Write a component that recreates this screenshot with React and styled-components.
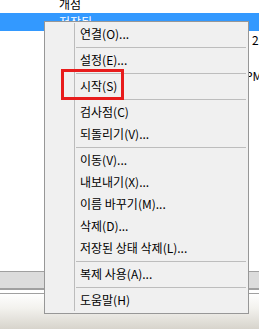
import styled, { createGlobalStyle } from "styled-components";

const GlobalStyle = createGlobalStyle`
    html, body {
        margin: 0;
        padding: 0;
        width: 259px;
        height: 329px;
        overflow: hidden;
        background: #fff;
        font-family: "Noto Sans CJK KR", "Noto Sans", sans-serif;
    }
`;

const Window = styled.div`
    position: relative;
    width: 259px;
    height: 329px;
    display: flex;
    flex-direction: column;
    overflow: hidden;
    background: #fff;
`;

const List = styled.div`
    flex: 1;
    display: flex;
    flex-direction: column;
`;

const Row = styled.div`
    display: flex;
    align-items: flex-end;
    height: ${(p) => p.$h || 18}px;
    overflow: hidden;
    background: ${(p) => (p.$selected ? "#3399ff" : "transparent")};
    color: ${(p) => (p.$selected ? "#fff" : "#000")};
    font-size: 12px;
    line-height: 18px;
    white-space: nowrap;
`;

const NameCell = styled.div`
    width: 245px;
    padding-left: 59px;
    box-sizing: border-box;
    flex-shrink: 0;
`;

const DateCell = styled.div`
    flex-shrink: 0;
    padding-left: ${(p) => p.$indent || 0}px;
`;

const StatusBand = styled.div`
    height: 16px;
    background: #dcdcdc;
    border-top: 1px solid #a0a0a0;
    border-bottom: 2px solid #a0a0a0;
`;

const Gap = styled.div`
    height: 3px;
    background: #fff;
    border-bottom: 1px solid #a0a0a0;
`;

const Footer = styled.div`
    height: 35px;
    background: linear-gradient(#fefefe, #f3f2ee 40%, #d7d4cc);
`;

const Menu = styled.div`
    position: absolute;
    left: 44px;
    top: 21px;
    width: 205px;
    box-sizing: border-box;
    padding: 1px 2px 2px;
    background: #f0f0f0;
    border: 1px solid #979797;
    display: flex;
    flex-direction: column;
    font-size: 12px;
    color: #000;
`;

const Item = styled.div`
    display: flex;
    height: ${(p) => (p.$sep ? 4 : 22)}px;
`;

const Gutter = styled.div`
    width: 27px;
    flex-shrink: 0;
    border-right: 1px solid #bcbcbc;
`;

const Label = styled.div`
    flex: 1;
    padding-left: 5px;
    line-height: 22px;
    white-space: nowrap;
`;

const SepLine = styled.div`
    flex: 1;
    margin: 2px 0 0 1px;
    height: 1px;
    background: #bdbdbd;
`;

const Highlight = styled.div`
    position: absolute;
    left: 61px;
    top: 69px;
    width: 63px;
    height: 31px;
    box-sizing: border-box;
    border: 3px solid #e81c1c;
`;

const rows = [
    { name: "개점", h: 13 },
    { name: "저장됨", selected: true },
    { name: "", date: "2013", indent: 7 },
    { name: "" },
    { name: "", date: "PM", indent: 0 },
];

const menu = [
    "연결(O)...",
    "-",
    "설정(E)...",
    "-",
    "시작(S)",
    "-",
    "검사점(C)",
    "되돌리기(V)...",
    "-",
    "이동(V)...",
    "내보내기(X)...",
    "이름 바꾸기(M)...",
    "삭제(D)...",
    "저장된 상태 삭제(L)...",
    "-",
    "복제 사용(A)...",
    "-",
    "도움말(H)",
];

export default function App() {
    return (
        <>
            <GlobalStyle />
            <Window>
                <List>
                    {rows.map((r, i) => (
                        <Row key={i} $h={r.h} $selected={r.selected}>
                            <NameCell>{r.name}</NameCell>
                            <DateCell $indent={r.indent}>{r.date}</DateCell>
                        </Row>
                    ))}
                </List>
                <StatusBand />
                <Gap />
                <Footer />

                <Menu>
                    {menu.map((m, i) =>
                        m === "-" ? (
                            <Item key={i} $sep>
                                <Gutter />
                                <SepLine />
                            </Item>
                        ) : (
                            <Item key={i}>
                                <Gutter />
                                <Label>{m}</Label>
                            </Item>
                        )
                    )}
                </Menu>
                <Highlight />
            </Window>
        </>
    );
}
